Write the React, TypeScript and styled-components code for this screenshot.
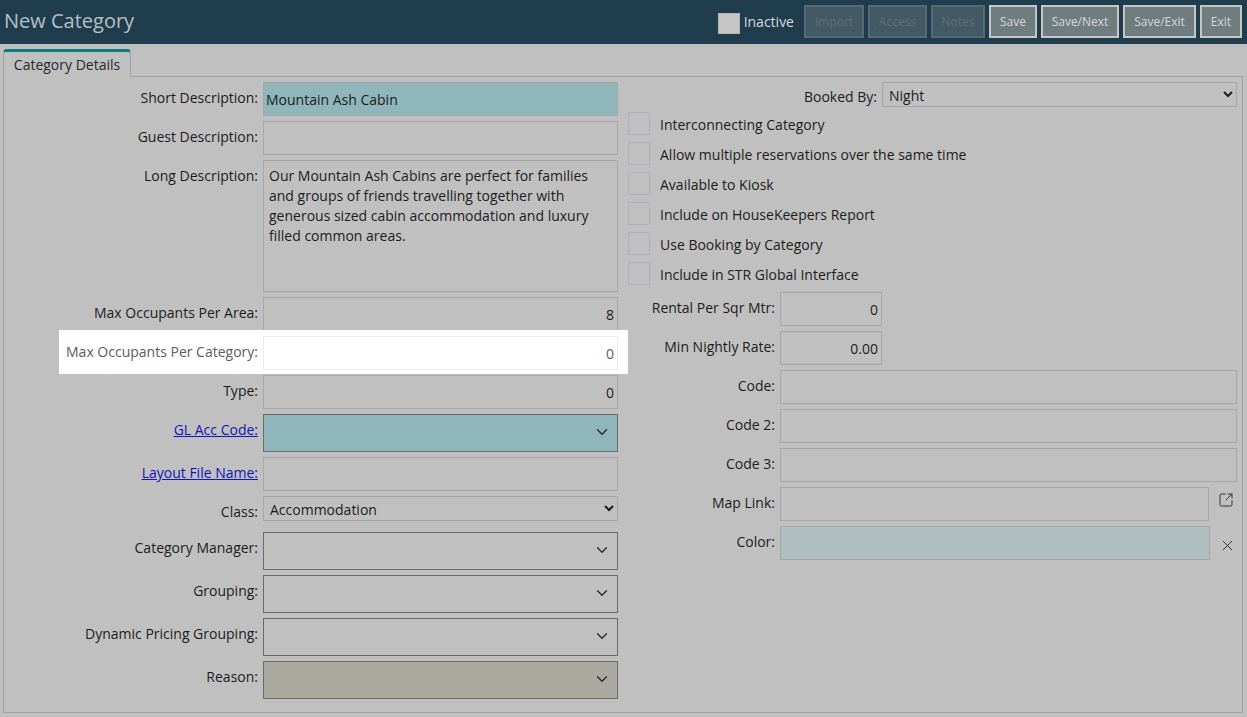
import React from "react";
import styled, { createGlobalStyle } from "styled-components";
import { ChevronDown, SquareArrowOutUpRight, X } from "lucide-react";

const Global = createGlobalStyle`
  html, body { margin: 0; padding: 0; height: 717px; overflow: hidden; background: #c0c0c0; }
  * { box-sizing: border-box; }
  body { font-family: "Open Sans", "Liberation Sans", sans-serif; font-size: 14px; color: #1c1c1c; }
`;

const Page = styled.div`
  width: 1247px; height: 717px; display: flex; flex-direction: column; background: #c0c0c0;
`;
const Header = styled.header`
  height: 44px; background: #203d4e; display: flex; align-items: center; padding: 0 5px 0 4px;
`;
const Title = styled.h1`
  margin: -4px auto 0 0; font-size: 20px; font-weight: 400; color: #b6c1c6;
`;
const InactiveWrap = styled.label`
  display: flex; align-items: center; gap: 4px; color: #d4dadd; font-size: 14px; margin: -2px 10px 0 0;
`;
const InactiveBox = styled.span`
  width: 22px; height: 21px; margin-top: 5px; background: #c6c6c6; border: 1px solid #b4b4b4; display: block;
`;
const Actions = styled.div`
  display: flex; gap: 4px; height: 33px; margin-top: -1px;
`;
const ActionButton = styled.button<{ $disabled?: boolean; $w: number }>`
  width: ${(p) => p.$w}px; height: 33px; padding: 0 0 1px; font-family: inherit; font-size: 12px;
  border: 2px solid ${(p) => (p.$disabled ? "#566a73" : "#c6c6c6")};
  background: ${(p) => (p.$disabled ? "#425a65" : "#6f7d7e")};
  color: ${(p) => (p.$disabled ? "#5f7078" : "#d4d8d8")};
`;
const TabBar = styled.div`
  padding: 5px 0 0 3px; height: 32px; flex: none; display: flex;
`;
const Tab = styled.div`
  width: 128px; height: 28px; border: 1px solid #a2a2a2; border-top: 3px solid #0e7c80; border-bottom: none;
  border-radius: 4px 4px 0 0; text-align: center; line-height: 26px; font-size: 14px; color: #252a2e;
  background: #c0c0c0; position: relative; z-index: 1;
`;
const Panel = styled.main`
  margin: 0 4px 0 3px; height: 637px; border: 1px solid #a2a2a2; padding: 5px 5px 0 0;
  display: grid; grid-template-columns: 614px 1fr; position: relative;
`;
const Column = styled.section`
  display: flex; flex-direction: column; gap: 5px; min-width: 0;
`;
const Row = styled.div<{ $labelW?: number; $highlight?: boolean; $gapAfter?: number }>`
  display: grid; grid-template-columns: ${(p) => p.$labelW ?? 254}px 1fr; column-gap: 5px;
  position: relative;
  margin-bottom: ${(p) => p.$gapAfter ?? 0}px;
  ${(p) =>
    p.$highlight &&
    `&::before { content: ""; position: absolute; left: 55px; right: -10px; top: -6px; bottom: -4px; background: #fff; }
     z-index: 2;`}
`;
const Label = styled.span<{ $muted?: boolean; $top?: number }>`
  position: relative; text-align: right; line-height: 20px; padding-top: ${(p) => p.$top ?? 6}px; white-space: nowrap;
  color: ${(p) => (p.$muted ? "#5c5c5c" : "#1c1c1c")};
`;
const LinkLabel = styled.a`
  color: #1414b8; text-decoration: underline;
`;
const TextField = styled.input<{ $bg?: string; $align?: string; $white?: boolean }>`
  position: relative; display: block; width: 100%; height: 34px; margin: 0; outline: none;
  font: 14px "Open Sans", "Liberation Sans", sans-serif; color: ${(p) => (p.$white ? "#5c5c5c" : "#1c1c1c")};
  padding: 1px ${(p) => (p.$align === "right" ? 3 : 2)}px 0 2px;
  text-align: ${(p) => p.$align ?? "left"};
  background: ${(p) => (p.$white ? "#fff" : p.$bg ?? "transparent")};
  border: 1px solid ${(p) => (p.$white ? "#ececec" : "#a6a6a6")};
`;
const TextArea = styled.textarea`
  display: block; width: 100%; height: 132px; margin: 0; padding: 5px 5px; resize: none; outline: none;
  font: 14px/20px "Open Sans", "Liberation Sans", sans-serif; color: #1c1c1c; background: transparent;
  border: 1px solid #a6a6a6; overflow: hidden;
`;
const Combo = styled.div<{ $bg?: string }>`
  height: 38px; border: 1px solid #6a6a6a; background: ${(p) => p.$bg ?? "transparent"};
  display: flex; align-items: center; justify-content: flex-end; padding: 0 6px 2px 0; color: #2a2a2a;
`;
const NativeSelect = styled.select`
  display: block; width: 100%; height: 25px; margin: 0; padding: 2px 0 0 2px; outline: none; border-radius: 0;
  font: 14px "Open Sans", "Liberation Sans", sans-serif; color: #1c1c1c; background: transparent;
  border: 1px solid #a6a6a6;
`;
const CheckList = styled.div`
  display: flex; flex-direction: column; gap: 7px; margin: 0 0 2px 10px;
`;
const CheckRow = styled.label`
  display: flex; align-items: center; gap: 10px; height: 23px; color: #1c1c1c;
`;
const CheckBox = styled.span`
  width: 22px; height: 23px; border: 1px solid #aeaebc; display: block; flex: none;
`;
const CheckText = styled.span`
  padding-top: 2px;
`;
const Narrow = styled.div`
  width: 102px;
`;
const SideSlot = styled.div<{ $side: number }>`
  display: grid; grid-template-columns: 1fr ${(p) => p.$side}px; align-items: center;
`;
const SideIcon = styled.span<{ $lift: number; $inset: number }>`
  display: flex; justify-content: center; padding-left: ${(p) => p.$inset}px; color: #2a2a2a;
  margin-top: ${(p) => p.$lift}px;
`;

const rightW = 157;
const Chevron = () => <ChevronDown size={18} strokeWidth={1.8} />;
const checks = [
  "Interconnecting Category",
  "Allow multiple reservations over the same time",
  "Available to Kiosk",
  "Include on HouseKeepers Report",
  "Use Booking by Category",
  "Include in STR Global Interface",
];

export default function App() {
  return (
    <Page>
      <Global />
      <Header>
        <Title>New Category</Title>
        <InactiveWrap>
          <InactiveBox />
          Inactive
        </InactiveWrap>
        <Actions>
          <ActionButton $disabled $w={60}>Import</ActionButton>
          <ActionButton $disabled $w={59}>Access</ActionButton>
          <ActionButton $disabled $w={54}>Notes</ActionButton>
          <ActionButton $w={48}>Save</ActionButton>
          <ActionButton $w={78}>Save/Next</ActionButton>
          <ActionButton $w={73}>Save/Exit</ActionButton>
          <ActionButton $w={42}>Exit</ActionButton>
        </Actions>
      </Header>
      <TabBar>
        <Tab>Category Details</Tab>
      </TabBar>
      <Panel>
        <Column>
          <Row>
            <Label>Short Description:</Label>
            <TextField readOnly defaultValue="Mountain Ash Cabin" $bg="#8fb6bb" />
          </Row>
          <Row>
            <Label>Guest Description:</Label>
            <TextField readOnly />
          </Row>
          <Row>
            <Label>Long Description:</Label>
            <TextArea
              readOnly
              defaultValue="Our Mountain Ash Cabins are perfect for families and groups of friends travelling together with generous sized cabin accommodation and luxury filled common areas."
            />
          </Row>
          <Row>
            <Label>Max Occupants Per Area:</Label>
            <TextField readOnly defaultValue="8" $align="right" />
          </Row>
          <Row $highlight>
            <Label $muted>Max Occupants Per Category:</Label>
            <TextField readOnly defaultValue="0" $align="right" $white />
          </Row>
          <Row>
            <Label>Type:</Label>
            <TextField readOnly defaultValue="0" $align="right" />
          </Row>
          <Row>
            <Label><LinkLabel href="#">GL Acc Code:</LinkLabel></Label>
            <Combo $bg="#8fb6bb"><Chevron /></Combo>
          </Row>
          <Row>
            <Label><LinkLabel href="#">Layout File Name:</LinkLabel></Label>
            <TextField readOnly />
          </Row>
          <Row $gapAfter={5}>
            <Label>Class:</Label>
            <NativeSelect defaultValue="Accommodation">
              <option>Accommodation</option>
            </NativeSelect>
          </Row>
          <Row>
            <Label>Category Manager:</Label>
            <Combo><Chevron /></Combo>
          </Row>
          <Row>
            <Label>Grouping:</Label>
            <Combo><Chevron /></Combo>
          </Row>
          <Row>
            <Label>Dynamic Pricing Grouping:</Label>
            <Combo><Chevron /></Combo>
          </Row>
          <Row>
            <Label>Reason:</Label>
            <Combo $bg="#aaaaa0"><Chevron /></Combo>
          </Row>
        </Column>
        <Column>
          <Row $labelW={259}>
            <Label $top={5}>Booked By:</Label>
            <NativeSelect defaultValue="Night">
              <option>Night</option>
            </NativeSelect>
          </Row>
          <CheckList>
            {checks.map((text) => (
              <CheckRow key={text}>
                <CheckBox />
                <CheckText>{text}</CheckText>
              </CheckRow>
            ))}
          </CheckList>
          <Row $labelW={rightW}>
            <Label>Rental Per Sqr Mtr:</Label>
            <Narrow><TextField readOnly defaultValue="0" $align="right" /></Narrow>
          </Row>
          <Row $labelW={rightW}>
            <Label>Min Nightly Rate:</Label>
            <Narrow><TextField readOnly defaultValue="0.00" $align="right" /></Narrow>
          </Row>
          <Row $labelW={rightW}>
            <Label>Code:</Label>
            <TextField readOnly />
          </Row>
          <Row $labelW={rightW}>
            <Label>Code 2:</Label>
            <TextField readOnly />
          </Row>
          <Row $labelW={rightW}>
            <Label>Code 3:</Label>
            <TextField readOnly />
          </Row>
          <Row $labelW={rightW}>
            <Label>Map Link:</Label>
            <SideSlot $side={28}>
              <TextField readOnly />
              <SideIcon $lift={-8} $inset={6}><SquareArrowOutUpRight size={16} strokeWidth={1.4} /></SideIcon>
            </SideSlot>
          </Row>
          <Row $labelW={rightW}>
            <Label>Color:</Label>
            <SideSlot $side={27}>
              <TextField readOnly $bg="#afbfbf" />
              <SideIcon $lift={4} $inset={8}><X size={17} strokeWidth={1.3} /></SideIcon>
            </SideSlot>
          </Row>
        </Column>
      </Panel>
    </Page>
  );
}
